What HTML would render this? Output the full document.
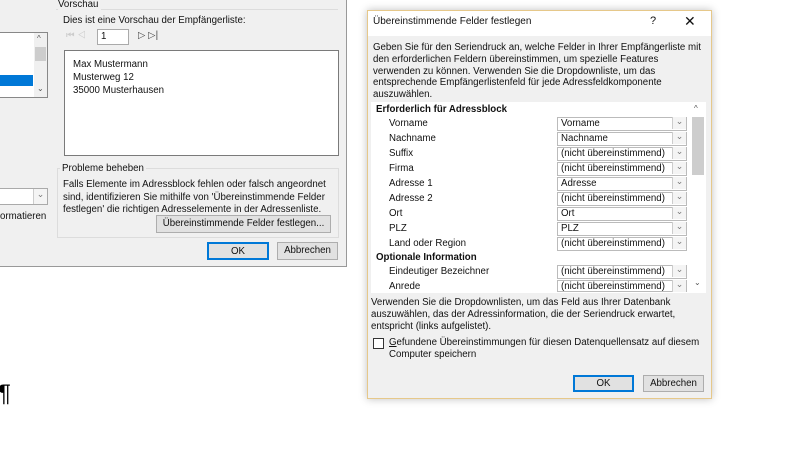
<!DOCTYPE html>
<html><head><meta charset="utf-8"><style>
*{box-sizing:border-box;margin:0;padding:0}
body{width:800px;height:450px;background:#fff;position:relative;overflow:hidden;font-family:"Liberation Sans",sans-serif;font-size:9.7px;color:#111}
.a{position:absolute;white-space:nowrap}
.box{position:absolute;background:#fff;border:1px solid #aaa}
.btn{position:absolute;background:#e1e1e1;border:1px solid #adadad;text-align:center;line-height:16px}
.dd{position:absolute;left:557px;width:130px;height:14px;background:#fff;border:1px solid #bbb;padding-left:3px;line-height:12px}
.dd:after{content:"⌄";position:absolute;right:0;top:-1px;width:13px;height:12px;border-left:1px solid #ccc;color:#777;font-size:9px;text-align:center;line-height:9px;background:#f4f4f4}
.lb{position:absolute;left:389px}
</style></head><body>
<!-- left dialog -->
<div class="a" style="left:0;top:0;width:347px;height:267px;background:#f0f0f0;border-right:1px solid #999;border-bottom:1px solid #999"></div>
<div class="a" style="left:56px;top:9px;width:282px;height:1px;background:#dcdcdc"></div>
<div class="a" style="left:58px;top:-1px;background:#f0f0f0;padding-right:3px">Vorschau</div>
<div class="a" style="left:63px;top:15px">Dies ist eine Vorschau der Empfängerliste:</div>
<div class="a" style="left:66px;top:30px;color:#ccc">⏮ ◁</div>
<div class="box" style="left:97px;top:29px;width:32px;height:16px;padding-left:3px;line-height:14px">1</div>
<div class="a" style="left:138px;top:30px;color:#444">▷ ▷|</div>
<div class="box" style="left:64px;top:50px;width:275px;height:106px;border-color:#7a7a7a;padding:7px 8px;line-height:13px;white-space:normal">Max Mustermann<br>Musterweg 12<br>35000 Musterhausen</div>
<div class="a" style="left:57px;top:168px;width:282px;height:70px;border:1px solid #dcdcdc"></div>
<div class="a" style="left:60px;top:163px;background:#f0f0f0;padding:0 2px">Probleme beheben</div>
<div class="a" style="left:63px;top:179px;line-height:12.5px">Falls Elemente im Adressblock fehlen oder falsch angeordnet<br>sind, identifizieren Sie mithilfe von 'Übereinstimmende Felder<br>festlegen' die richtigen Adresselemente in der Adressenliste.</div>
<div class="btn" style="left:156px;top:215px;width:175px;height:18px">Übereinstimmende Felder festlegen...</div>
<div class="btn" style="left:207px;top:242px;width:62px;height:18px;border:2px solid #0078d7">OK</div>
<div class="btn" style="left:277px;top:242px;width:61px;height:18px">Abbrechen</div>
<div class="box" style="left:-1px;top:32px;width:49px;height:66px;border-color:#888"></div>
<div class="a" style="left:0;top:75px;width:33px;height:11px;background:#0078d7"></div>
<div class="a" style="left:34px;top:33px;width:13px;height:64px;background:#f0f0f0"></div>
<div class="a" style="left:35px;top:47px;width:11px;height:14px;background:#cdcdcd"></div>
<div class="a" style="left:37px;top:34px;font-size:8px;color:#555">^</div>
<div class="a" style="left:37px;top:84px;font-size:8px;color:#555">⌄</div>
<div class="box" style="left:-1px;top:188px;width:49px;height:17px"></div>
<div class="a" style="left:33px;top:189px;width:14px;height:15px;border-left:1px solid #ccc;background:#f4f4f4;color:#777;text-align:center;font-size:9px">⌄</div>
<div class="a" style="left:0;top:211px">ormatieren</div>
<div class="a" style="left:-2px;top:380px;font-size:24px;color:#000">¶</div>
<!-- right dialog -->
<div class="a" style="left:367px;top:10px;width:345px;height:389px;background:#f0f0f0;border:1px solid #e6c88a;box-shadow:0 0 8px rgba(0,0,0,.25)"></div>
<div class="a" style="left:368px;top:11px;width:343px;height:25px;background:#fff"></div>
<div class="a" style="left:373px;top:16px;font-size:10px">Übereinstimmende Felder festlegen</div>
<div class="a" style="left:650px;top:15px;font-size:11px">?</div>
<div class="a" style="left:684px;top:13px;font-size:14px">✕</div>
<div class="a" style="left:373px;top:42px;line-height:11.8px">Geben Sie für den Seriendruck an, welche Felder in Ihrer Empfängerliste mit<br>den erforderlichen Feldern übereinstimmen, um spezielle Features<br>verwenden zu können. Verwenden Sie die Dropdownliste, um das<br>entsprechende Empfängerlistenfeld für jede Adressfeldkomponente<br>auszuwählen.</div>
<div class="a" style="left:371px;top:102px;width:335px;height:191px;background:#fff"></div>
<div class="a" style="left:692px;top:117px;width:12px;height:58px;background:#cdcdcd"></div>
<div class="a" style="left:694px;top:104px;font-size:8px;color:#555">^</div>
<div class="a" style="left:694px;top:278px;font-size:8px;color:#555">⌄</div>
<div class="a" style="left:376px;top:104px;font-weight:bold">Erforderlich für Adressblock</div>
<div class="lb" style="top:118px">Vorname</div><div class="dd" style="top:117px">Vorname</div>
<div class="lb" style="top:133px">Nachname</div><div class="dd" style="top:132px">Nachname</div>
<div class="lb" style="top:148px">Suffix</div><div class="dd" style="top:147px">(nicht übereinstimmend)</div>
<div class="lb" style="top:163px">Firma</div><div class="dd" style="top:162px">(nicht übereinstimmend)</div>
<div class="lb" style="top:178px">Adresse 1</div><div class="dd" style="top:177px">Adresse</div>
<div class="lb" style="top:193px">Adresse 2</div><div class="dd" style="top:192px">(nicht übereinstimmend)</div>
<div class="lb" style="top:208px">Ort</div><div class="dd" style="top:207px">Ort</div>
<div class="lb" style="top:223px">PLZ</div><div class="dd" style="top:222px">PLZ</div>
<div class="lb" style="top:238px">Land oder Region</div><div class="dd" style="top:237px">(nicht übereinstimmend)</div>
<div class="a" style="left:376px;top:252px;font-weight:bold">Optionale Information</div>
<div class="lb" style="top:266px">Eindeutiger Bezeichner</div><div class="dd" style="top:265px">(nicht übereinstimmend)</div>
<div class="lb" style="top:281px">Anrede</div><div class="dd" style="top:280px;height:12px">(nicht übereinstimmend)</div>
<div class="a" style="left:371px;top:293px;width:335px;height:6px;background:#f0f0f0"></div>
<div class="a" style="left:371px;top:297px;line-height:11.8px">Verwenden Sie die Dropdownlisten, um das Feld aus Ihrer Datenbank<br>auszuwählen, das der Adressinformation, die der Seriendruck erwartet,<br>entspricht (links aufgelistet).</div>
<div class="a" style="left:373px;top:338px;width:11px;height:11px;background:#fff;border:1px solid #333"></div>
<div class="a" style="left:389px;top:337px;line-height:11.5px"><u>G</u>efundene Übereinstimmungen für diesen Datenquellensatz auf diesem<br>Computer speichern</div>
<div class="btn" style="left:573px;top:375px;width:61px;height:17px;border:2px solid #0078d7;line-height:13px">OK</div>
<div class="btn" style="left:643px;top:375px;width:61px;height:17px;line-height:15px">Abbrechen</div>
</body></html>
